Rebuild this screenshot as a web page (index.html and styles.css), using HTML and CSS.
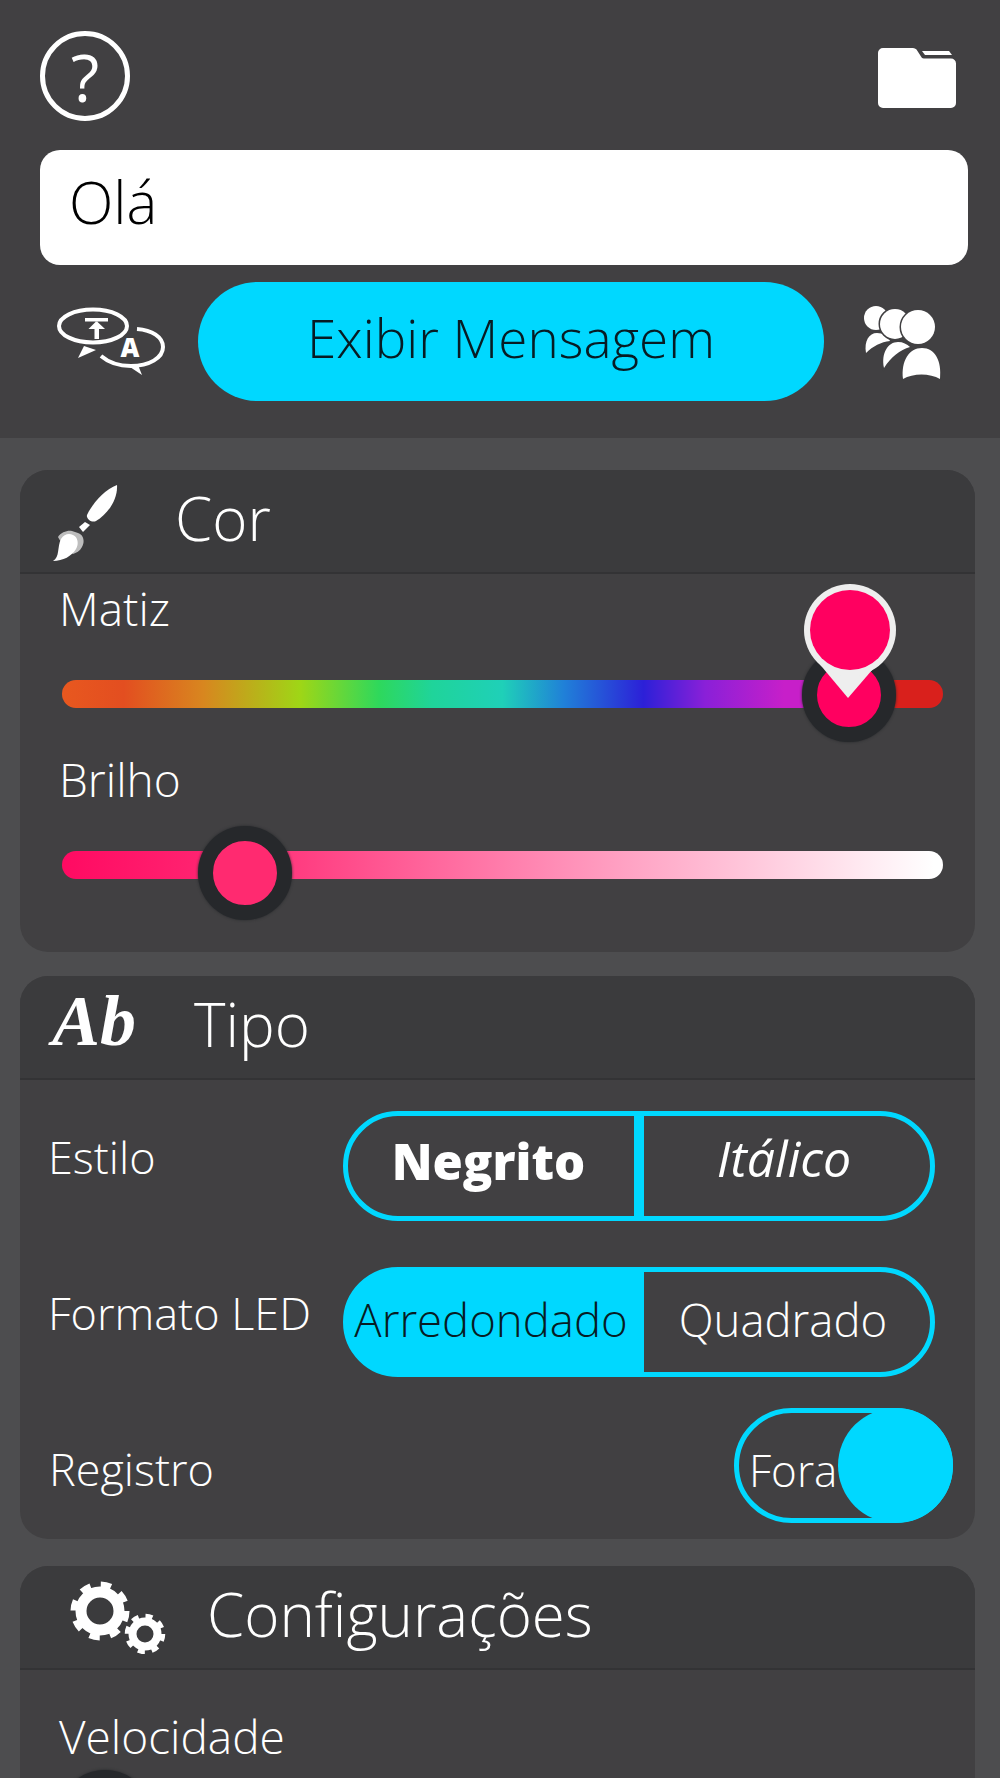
FILE: index.html
```html
<!DOCTYPE html>
<html lang="pt">
<head>
    <meta charset="UTF-8">
    <meta name="viewport" content="width=device-width, initial-scale=1.0">
    <title>Painel LED</title>
    <link rel="stylesheet" href="styles.css">
</head>
<body>
    <header class="top">
        <div class="top-row">
            <div class="help">?</div>
            <svg class="folder" viewBox="0 0 80 62">
                <path d="M1 6a5 5 0 0 1 5-5h30a5 5 0 0 1 3.500 1.500l4.500 7a3 3 0 0 0 3 2H74a5 5 0 0 1 5 5V56a5 5 0 0 1-5 5H6a5 5 0 0 1-5-5z" fill="#fff"/>
                <path d="M45 4h27l3 4H48z" fill="#fff"/>
            </svg>
        </div>
        <div class="message">Olá</div>
        <div class="action-row">
            <svg class="translate" viewBox="57 306 108 70">
                <ellipse cx="93" cy="325" rx="34" ry="16.500" fill="none" stroke="#fff" stroke-width="4"/>
                <path d="M84 345l-6 12 18-8z" fill="#fff"/>
                <path d="M85 317h23v3.500H85zM96.500 320l-8 8h6v10h4.500v-10h6z" fill="#fff"/>
                <path d="M137 328c15 1 26 8 26 18 0 11-14 19-32 19-13 0-23-4-30-10" fill="none" stroke="#fff" stroke-width="4"/>
                <path d="M127 364l15 10-4-10z" fill="#fff"/>
                <text class="translate-a" x="130" y="356" text-anchor="middle">A</text>
            </svg>
            <div class="show-btn">Exibir Mensagem</div>
            <svg class="people" viewBox="863 303 80 78">
                <g fill="#fff" stroke="#414042" stroke-width="3" paint-order="stroke">
                    <circle cx="876" cy="318" r="12"/>
                    <path d="M866 353c-2-12 3-20 11-20 6 0 11 3 13 8-9 1-17 5-24 12z"/>
                    <circle cx="895" cy="324" r="15"/>
                    <path d="M884 368c-3-15 4-26 14-26 5 0 9 2 12 5-10 3-19 10-26 21z"/>
                    <circle cx="918" cy="327" r="17"/>
                    <path d="M903 379c-2-18 6-31 19-31s20 13 18 31c-10-6-27-6-37 0z"/>
                </g>
            </svg>
        </div>
    </header>

    <section class="card card-color">
        <div class="card-head">
            <svg class="brush" viewBox="50 484 70 82">
                <path d="M117 486c-12 4-25 19-30 30-1 4 5 8 9 6 12-7 22-22 21-36z" fill="#fff"/>
                <path d="M79 528l6-5 5 3-7 7z" fill="#fff"/>
                <path d="M58 538c3-5 10-7 14-6l6 2c6 2 7 9 4 14-2 4-6 6-9 7-6-5-12-11-15-17z" fill="#bdbdbd"/>
                <path d="M53 562c7-4 4-14 8-22 3-5 8-6 12-4 5 2 6 9 3 14-4 7-13 12-23 12z" fill="#fff"/>
            </svg>
            <h2 class="title title-color">Cor</h2>
        </div>
        <div class="card-body">
            <div class="label">Matiz</div>
            <div class="track track-hue">
                <div class="thumb thumb-hue"></div>
                <svg class="bubble" viewBox="800 580 100 120">
                    <path d="M812 655l36 43 37-43z" fill="#eee"/>
                    <circle cx="850" cy="630" r="46" fill="#eee"/>
                    <circle cx="850" cy="630" r="40" fill="#ff0060"/>
                </svg>
            </div>
            <div class="label label-next">Brilho</div>
            <div class="track track-bright">
                <div class="thumb thumb-bright"></div>
            </div>
        </div>
    </section>

    <section class="card card-type">
        <div class="card-head">
            <span class="ab-icon">Ab</span>
            <h2 class="title title-type">Tipo</h2>
        </div>
        <div class="card-body type-body">
            <div class="row">
                <div class="row-label">Estilo</div>
                <div class="seg">
                    <div class="seg-item seg-left seg-bold">Negrito</div>
                    <div class="seg-item seg-italic">Itálico</div>
                </div>
            </div>
            <div class="row row-led">
                <div class="row-label">Formato LED</div>
                <div class="seg seg-led">
                    <div class="seg-item seg-left seg-on">Arredondado</div>
                    <div class="seg-item">Quadrado</div>
                </div>
            </div>
            <div class="row row-log">
                <div class="row-label log-label">Registro</div>
                <div class="toggle">
                    <span class="toggle-text">Fora</span>
                    <div class="toggle-knob"></div>
                </div>
            </div>
        </div>
    </section>

    <section class="card card-config">
        <div class="card-head">
            <svg class="gears" viewBox="68 1578 100 74">
                <g fill="none" stroke="#fff">
                    <circle cx="100" cy="1609" r="19" stroke-width="11"/>
                    <circle cx="100" cy="1609" r="26" stroke-width="7" stroke-dasharray="10.200 10.220"/>
                    <circle cx="145" cy="1632" r="12.500" stroke-width="8"/>
                    <circle cx="145" cy="1632" r="17.500" stroke-width="5.500" stroke-dasharray="6.900 6.840"/>
                </g>
            </svg>
            <h2 class="title title-config">Configurações</h2>
        </div>
        <div class="card-body config-body">
            <div class="label">Velocidade</div>
            <div class="track track-speed">
                <div class="thumb thumb-speed"></div>
            </div>
        </div>
    </section>
</body>
</html>
```

FILE: styles.css
```css
html, body {
    height: 1778px;
    overflow: hidden;
}
body {
    margin: 0;
    background-color: #4d4d4f;
    font-family: "Open Sans", "Liberation Sans", sans-serif;
    font-weight: 300;
    color: #fff;
}

/* top block */
.top {
    height: 438px;
    box-sizing: border-box;
    padding: 31px 32px 0 40px;
    background-color: #414042;
}
.top-row {
    display: flex;
    justify-content: space-between;
    align-items: flex-start;
}
.help {
    width: 90px;
    height: 90px;
    box-sizing: border-box;
    border: 5px solid #fff;
    border-radius: 50%;
    display: flex;
    align-items: center;
    justify-content: center;
    font-size: 66px;
    font-weight: 400;
    line-height: 1;
}
.folder {
    width: 80px;
    height: 62px;
    margin: 16px 11px 0 0;
}
.message {
    height: 115px;
    margin-top: 29px;
    padding-left: 29px;
    background-color: #fff;
    border-radius: 20px;
    color: #000;
    font-size: 58px;
    line-height: 104px;
}
.action-row {
    display: flex;
    align-items: center;
    margin-top: 17px;
}
.translate {
    width: 108px;
    height: 70px;
    margin: 0 33px 0 17px;
}
.translate-a {
    font-size: 26px;
    font-weight: 800;
    fill: #fff;
}
.show-btn {
    width: 626px;
    height: 119px;
    background-color: #00d8ff;
    border-radius: 60px;
    color: #071c24;
    font-size: 53px;
    line-height: 111px;
    text-align: center;
}
.people {
    width: 80px;
    height: 78px;
    margin-left: 39px;
}

/* cards */
.card {
    margin: 32px 25px 0 20px;
    border-radius: 28px;
    background-color: #414042;
    overflow: hidden;
}
.card-type {
    margin-top: 24px;
}
.card-config {
    margin-top: 27px;
}
.card-head {
    height: 102px;
    display: flex;
    align-items: center;
    background-color: #3b3b3d;
    border-bottom: 2px solid #333335;
}
.title {
    margin: 0 0 7px;
    font-size: 60px;
    font-weight: 300;
    line-height: 1;
}
.title-color {
    margin-left: 55px;
}
.title-type {
    margin-left: 58px;
}
.title-config {
    margin-left: 39px;
}
.brush {
    width: 70px;
    height: 82px;
    margin: 6px 0 0 30px;
}
.ab-icon {
    margin: 0 0 12px 32px;
    font-family: "Liberation Serif", serif;
    font-size: 72px;
    font-style: italic;
    font-weight: 700;
    line-height: 1;
}
.gears {
    width: 100px;
    height: 74px;
    margin-left: 48px;
}

.card-body {
    padding: 9px 32px 73px 42px;
}
.config-body {
    padding-top: 41px;
}
.label {
    margin-left: -3px;
    font-size: 46px;
    line-height: 50px;
}
.label-next {
    margin-top: 46px;
}
.track {
    position: relative;
    height: 28px;
    margin-top: 47px;
    border-radius: 14px;
}
.track-hue {
    background: linear-gradient(to right, #e8581f 0%, #e34e20 7%, #d8861f 16%, #9fd616 27%, #2ed85c 36%, #1fd49a 42%, #1fd0b8 50%, #2080d8 57%, #2c20d8 66%, #8a20d8 73%, #c71fc9 82%, #c71fc9 90%, #d9201c 91%, #d9201c 100%);
}
.track-bright {
    background: linear-gradient(to right, #ff0a62 0%, #ff2a74 20%, #ff8ab4 55%, #ffffff 99%);
}
.thumb {
    position: absolute;
    width: 94px;
    height: 94px;
    box-sizing: border-box;
    border: 15px solid #26282b;
    border-radius: 50%;
    box-shadow: 0 0 3px #26282b;
    transform: translate(-50%, -50%);
}
.thumb-hue {
    left: 89.300%;
    top: 15px;
    background-color: #ff0060;
}
.thumb-bright {
    left: 20.800%;
    top: 22px;
    background-color: #ff2a70;
}
.thumb-speed {
    left: 4.900%;
    top: 9px;
    background-color: #ff2a70;
}
.bubble {
    position: absolute;
    left: 738px;
    top: -100px;
    width: 100px;
    height: 120px;
}

/* type rows */
.type-body {
    padding: 31px 22px 16px 28px;
}
.row {
    display: flex;
    align-items: center;
    justify-content: space-between;
}
.row-led {
    margin-top: 46px;
}
.row-log {
    margin-top: 31px;
}
.row-label {
    margin-bottom: 18px;
    font-size: 45px;
    line-height: 50px;
}
.log-label {
    margin: 6px 0 0 1px;
}
.seg {
    width: 592px;
    height: 110px;
    box-sizing: border-box;
    margin-right: 18px;
    display: flex;
    border: 5px solid #00d8ff;
    border-radius: 55px;
    overflow: hidden;
}
.seg-led {
    background: linear-gradient(to right, #00d8ff 301px, transparent 301px) border-box;
}
.seg-item {
    flex: 1;
    padding-right: 8px;
    text-align: center;
    font-size: 45.500px;
    line-height: 94px;
}
.seg-left {
    flex: 0 0 296px;
    box-sizing: border-box;
    padding-right: 0;
    border-right: 10px solid #00d8ff;
}
.seg-bold {
    padding-right: 5px;
    font-size: 49px;
    font-weight: 800;
    line-height: 91px;
}
.seg-italic {
    padding-right: 6px;
    font-style: italic;
    font-weight: 400;
    font-size: 50px;
    line-height: 84px;
}
.seg-on {
    border-right-color: transparent;
    color: #071c24;
}
.toggle {
    position: relative;
    width: 219px;
    height: 115px;
    box-sizing: border-box;
    border: 5px solid #00d8ff;
    border-radius: 58px;
}
.toggle-text {
    display: block;
    margin-left: 10px;
    font-size: 44px;
    line-height: 114px;
}
.toggle-knob {
    position: absolute;
    right: -5px;
    top: -5px;
    width: 115px;
    height: 115px;
    border-radius: 50%;
    background-color: #00d8ff;
}
```
